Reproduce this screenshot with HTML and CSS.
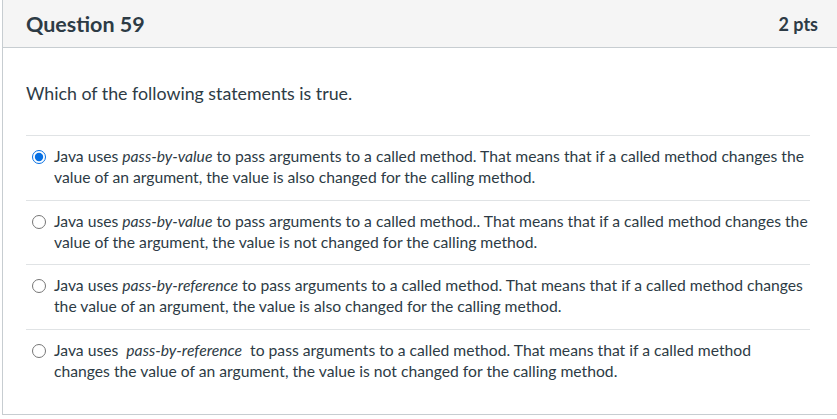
FILE: index.html
```html
<!DOCTYPE html>
<html lang="en">
<head>
    <meta charset="UTF-8">
    <title>Question 59</title>
    <link rel="stylesheet" href="styles.css">
</head>
<body>
    <div class="quiz-question">
        <div class="header">
            <h2>Question 59</h2>
            <span class="points">2 pts</span>
        </div>

        <div class="content">
            <p class="question-text">Which of the following statements is true.</p>

            <div class="answers">
                <label class="answer">
                    <input type="radio" name="q59" checked>
                    <span>Java uses <em>pass-by-value</em> to pass arguments to a called method. That means that if a called method changes the value of an argument, the value is also changed for the calling method.</span>
                </label>
                <label class="answer">
                    <input type="radio" name="q59">
                    <span>Java uses <em>pass-by-value</em> to pass arguments to a called method.. That means that if a called method changes the value of the argument, the value is not changed for the calling method.</span>
                </label>
                <label class="answer">
                    <input type="radio" name="q59">
                    <span>Java uses <em>pass-by-reference</em> to pass arguments to a called method. That means that if a called method changes the value of an argument, the value is also changed for the calling method.</span>
                </label>
                <label class="answer">
                    <input type="radio" name="q59">
                    <span>Java uses &nbsp;<em>pass-by-reference</em>&nbsp; to pass arguments to a called method. That means that if a called method changes the value of an argument, the value is not changed for the calling method.</span>
                </label>
            </div>
        </div>
    </div>
</body>
</html>
```

FILE: styles.css
```css
* { margin: 0; padding: 0; box-sizing: border-box; }
body { font-family: Lato, "Open Sans", sans-serif; background: white; color: #2d3b45; }
.quiz-question { margin-left: 2px; width: 837px; height: 415px; border: 1px solid #c7cdd1; border-top: none; }
.header { display: flex; justify-content: space-between; align-items: center; height: 48px; padding: 0 20px 0 23px; background: #f5f5f5; border-bottom: 1px solid #c7cdd1; }
.header h2 { font-size: 21.5px; font-weight: bold; }
.points { font-size: 18px; font-weight: bold; }
.content { padding: 33px 23px 0; width: 830px; }
.question-text { font-size: 17.8px; line-height: 24px; margin-bottom: 30px; }
.answer { display: flex; align-items: flex-start; gap: 8px; padding: 10px 0 11.5px 6px; border-top: 1px solid #e0e3e5; font-size: 15.7px; line-height: 21px; cursor: pointer; }
.answer input { flex: none; width: 14px; height: 14px; margin-top: 4px; accent-color: #0770e3; }
```
